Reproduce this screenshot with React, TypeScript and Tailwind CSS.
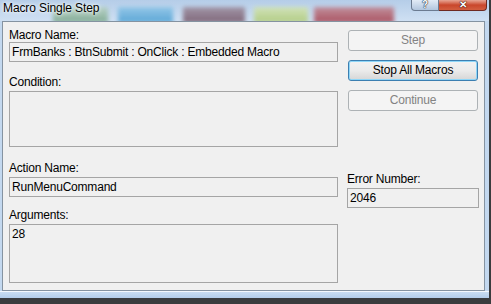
import { ReactNode } from 'react'

const font = { fontFamily: '"Liberation Sans", Arial, sans-serif' }

function Label({ children, className = '' }: { children: ReactNode; className?: string }) {
  return <div className={`text-[12px] leading-[14px] tracking-[-0.2px] text-black ${className}`}>{children}</div>
}

function Field({ value, className = '' }: { value?: string; className?: string }) {
  return (
    <div className={`border border-[#a5a5a5] bg-[#f0f0f0] px-[2px] text-[12px] leading-[14px] tracking-[-0.2px] text-black ${className}`}>
      {value}
    </div>
  )
}

function Button({ label, primary, disabled }: { label: string; primary?: boolean; disabled?: boolean }) {
  if (primary) {
    return (
      <div className="ml-[1px] mt-[9px] h-[21px] w-[130px] rounded-[3px] border border-[#3c7fb1] bg-gradient-to-b from-[#f2f2f2] via-[#ebebeb] to-[#d6d6d6] shadow-[inset_0_0_0_1px_#8ed6f8] text-center text-[12px] leading-[19px] tracking-[-0.2px] text-black">
        {label}
      </div>
    )
  }
  return (
    <div
      className={`ml-[1px] h-[21px] w-[130px] rounded-[3px] border border-[#adb2b5] bg-[#f4f4f4] text-center text-[12px] leading-[19px] tracking-[-0.2px] ${
        disabled ? 'text-[#838383]' : 'text-black'
      } ${label === 'Step' ? 'mt-[8px]' : 'mt-[9px]'}`}
    >
      {label}
    </div>
  )
}

export default function App() {
  return (
    <div className="w-[491px] h-[304px] overflow-hidden bg-[#3a3c3e]" style={font}>
      <div className="w-[489px] h-[298px] flex flex-col bg-[#c3d8ef]">
        {/* Title bar */}
        <div className="relative h-[21px] bg-gradient-to-b from-[#b5cde8] to-[#cfe0f3] overflow-hidden">
          {/* blurred stuff behind the glass */}
          <div className="flex pt-[7px] blur-[2px] opacity-80">
            <div className="ml-[53px] w-[55px] h-[16px] bg-gradient-to-b from-[#b5d0bd] to-[#6f9f7e]" />
            <div className="ml-[10px] w-[55px] h-[16px] bg-gradient-to-b from-[#86c3e6] to-[#3c98cf]" />
            <div className="ml-[10px] w-[62px] h-[16px] bg-gradient-to-b from-[#9a8696] to-[#6c4a5c]" />
            <div className="ml-[9px] w-[54px] h-[16px] bg-gradient-to-b from-[#d6e6ac] to-[#aac766]" />
            <div className="ml-[6px] w-[80px] h-[16px] bg-gradient-to-b from-[#bf7d88] to-[#a12c3e]" />
          </div>
          <div className="absolute left-[3px] top-[1px] text-[12px] leading-[15px] tracking-[-0.1px] text-black [text-shadow:0_0_6px_#ffffff,0_0_3px_#ffffff]">
            Macro Single Step
          </div>
          {/* caption buttons */}
          <div className="absolute right-[2px] top-0 flex">
            <div className="w-[28px] h-[11px] rounded-bl-[4px] border border-t-0 border-[#6b7b91] bg-gradient-to-b from-[#e2ebf6] to-[#b2c6de] flex items-center justify-center text-[10px] leading-[10px] font-bold text-white [text-shadow:0_0_1px_#263447,0_0_1px_#263447,0_0_1px_#263447]">
              ?
            </div>
            <div className="w-[48px] h-[11px] rounded-br-[4px] border border-t-0 border-l-0 border-[#6e2a22] bg-gradient-to-b from-[#e6a594] via-[#c9462b] to-[#d25e40] flex items-center justify-center text-[10px] leading-[10px] font-bold text-white [text-shadow:0_0_1px_#3b1009,0_0_1px_#3b1009,0_0_1px_#3b1009]">
              ✕
            </div>
          </div>
        </div>

        {/* Client area */}
        <div className="ml-[2px] w-[483px] h-[270px] border border-[#8593a1] bg-[#f0f0f0] flex">
          <div className="ml-[6px] w-[329px] flex flex-col">
            <Label className="mt-[6px]">Macro Name:</Label>
            <Field className="h-[20px] pt-[2px]" value="FrmBanks : BtnSubmit : OnClick : Embedded Macro" />
            <Label className="mt-[13px]">Condition:</Label>
            <Field className="mt-[2px] h-[56px]" />
            <Label className="mt-[14px]">Action Name:</Label>
            <Field className="mt-[2px] h-[20px] pt-[2px]" value="RunMenuCommand" />
            <Label className="mt-[11px]">Arguments:</Label>
            <Field className="mt-[2px] h-[59px] pt-[2px]" value="28" />
          </div>
          <div className="ml-[9px] w-[132px] flex flex-col">
            <Button label="Step" disabled />
            <Button label="Stop All Macros" primary />
            <Button label="Continue" disabled />
            <Label className="mt-[61px]">Error Number:</Label>
            <Field className="mt-[2px] h-[20px] pt-[2px]" value="2046" />
          </div>
        </div>

        {/* bottom frame */}
        <div className="flex-1 border-t border-[#f4f8fc] bg-gradient-to-b from-[#c9ddf2] to-[#b3cdea]" />
      </div>
    </div>
  )
}
